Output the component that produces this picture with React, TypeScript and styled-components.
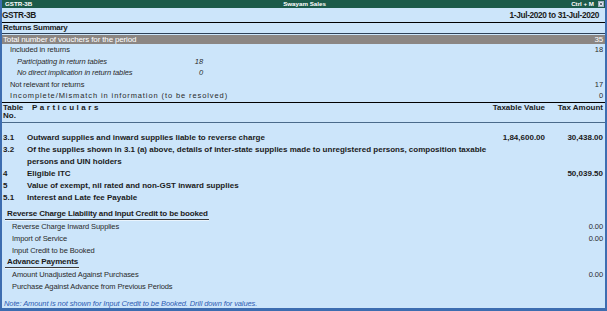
import React from "react";
import styled, { createGlobalStyle } from "styled-components";

const GlobalStyle = createGlobalStyle`
  html, body { margin: 0; padding: 0; background: #cce5fa; }
  body { width: 607px; height: 311px; overflow: hidden; }
`;

const Window = styled.div`
  box-sizing: border-box;
  width: 607px;
  height: 311px;
  display: flex;
  flex-direction: column;
  background: #cce5fa;
  border-left: 2px solid #3d6db0;
  border-right: 2px solid #3d6db0;
  border-bottom: 3px solid #3d6db0;
  font-family: "Liberation Sans", Arial, sans-serif;
  color: #1b1b1b;
  overflow: hidden;
`;

const TitleBar = styled.div`
  flex: none;
  height: 8px;
  display: grid;
  grid-template-columns: 1fr auto 1fr;
  align-items: center;
  padding: 0 1px 0 3px;
  background: #1c5b4a;
  color: #ffffff;
  font-size: 6.2px;
  font-weight: bold;
  line-height: 8px;
`;

const TitleRight = styled.div`
  display: flex;
  justify-content: flex-end;
  align-items: center;
  gap: 4px;
`;

const CloseBox = styled.span`
  display: inline-flex;
  width: 6px;
  height: 6px;
`;

const Header = styled.div`
  flex: none;
  height: 14px;
  display: flex;
  justify-content: space-between;
  align-items: center;
  padding: 0 6px 0 0;
  font-size: 8.3px;
  font-weight: bold;
  letter-spacing: -0.35px;
  border-bottom: 1px solid #000;
`;

const SectionTitle = styled.div`
  flex: none;
  height: 10px;
  line-height: 10px;
  padding-left: 1px;
  font-size: 8px;
  font-weight: bold;
  letter-spacing: -0.3px;
  border-bottom: 1px solid #2d4058;
  margin-bottom: 1px;
`;

const GreyBar = styled.div`
  flex: none;
  height: 9px;
  line-height: 9px;
  display: flex;
  justify-content: space-between;
  padding: 0 2px 0 1px;
  background: #8b8683;
  color: #ffffff;
  font-size: 8px;
  letter-spacing: -0.15px;
`;

const SummaryRow = styled.div<{ $italic?: boolean; $spread?: boolean }>`
  flex: none;
  height: 11.5px;
  line-height: 11.5px;
  display: grid;
  grid-template-columns: 201px 1fr;
  padding-right: 2px;
  font-size: 7.5px;
  letter-spacing: ${(p) => (p.$spread ? "0.9px" : "-0.1px")};
  color: #2a2a2a;
  font-style: ${(p) => (p.$italic ? "italic" : "normal")};
  white-space: nowrap;
`;

const SummaryLabel = styled.div<{ $indent: number }>`
  display: flex;
  justify-content: space-between;
  padding-left: ${(p) => p.$indent}px;
`;

const RightValue = styled.div`
  text-align: right;
  letter-spacing: -0.1px;
`;

const TableGrid = styled.div`
  display: grid;
  grid-template-columns: 24px 1fr 70px 58px;
  padding: 0 2px 0 1px;
  font-size: 8px;
  font-weight: bold;
`;

const TableHead = styled(TableGrid)`
  flex: none;
  box-sizing: border-box;
  height: 21px;
  line-height: 8px;
  padding-top: 1px;
  border-top: 1px solid #000;
  border-bottom: 1px solid #4a6a8a;
`;

const SpacedHead = styled.div`
  padding-left: 5px;
  letter-spacing: 2.5px;
`;

const Particular = styled.div`
  white-space: nowrap;
`;

const NumCell = styled.div`
  text-align: right;
`;

const TableBody = styled.div`
  flex: none;
  padding-top: 9px;
  line-height: 12px;
`;

const Group = styled.div`
  flex: none;
  display: flex;
  flex-direction: column;
  align-items: flex-start;
`;

const GroupHeading = styled.div<{ $first?: boolean }>`
  height: 10px;
  line-height: 10px;
  margin-left: 3px;
  margin-top: ${(p) => (p.$first ? "5px" : "0")};
  margin-bottom: 1px;
  padding: 0 1px 0 2px;
  font-size: 8px;
  font-weight: bold;
  letter-spacing: -0.15px;
  border-bottom: 1px solid #3b3b3b;
  box-shadow: 0 1px 0 #eaf4fd;
`;

const ItemRow = styled.div`
  align-self: stretch;
  height: 12px;
  line-height: 12px;
  display: flex;
  justify-content: space-between;
  padding: 0 2px 0 10px;
  font-size: 7.5px;
  letter-spacing: -0.1px;
  color: #2a2a2a;
`;

const Note = styled.div`
  margin-top: auto;
  flex: none;
  height: 9px;
  line-height: 9px;
  padding-left: 2px;
  font-size: 7.5px;
  font-style: italic;
  letter-spacing: -0.1px;
  color: #2c5cb3;
`;

type Summary = {
  label: string;
  indent: number;
  italic?: boolean;
  spread?: boolean;
  inline?: string;
  value?: string;
};

const summary: Summary[] = [
  { label: "Included in returns", indent: 8, value: "18" },
  { label: "Participating in return tables", indent: 15, italic: true, inline: "18" },
  { label: "No direct implication in return tables", indent: 15, italic: true, inline: "0" },
  { label: "Not relevant for returns", indent: 8, value: "17" },
  { label: "Incomplete/Mismatch in information (to be resolved)", indent: 8, spread: true, value: "0" },
];

type TRow = { no: string; text: React.ReactNode; taxable?: string; tax?: string };

const rows: TRow[] = [
  {
    no: "3.1",
    text: "Outward supplies and inward supplies liable to reverse charge",
    taxable: "1,84,600.00",
    tax: "30,438.00",
  },
  {
    no: "3.2",
    text: (
      <>
        Of the supplies shown in 3.1 (a) above, details of inter-state supplies made to unregistered persons, composition taxable
        <br />
        persons and UIN holders
      </>
    ),
  },
  { no: "4", text: "Eligible ITC", tax: "50,039.50" },
  { no: "5", text: "Value of exempt, nil rated and non-GST inward supplies" },
  { no: "5.1", text: "Interest and Late fee Payable" },
];

const reverseItems: [string, string][] = [
  ["Reverse Charge Inward Supplies", "0.00"],
  ["Import of Service", "0.00"],
  ["Input Credit to be Booked", ""],
];

const advanceItems: [string, string][] = [
  ["Amount Unadjusted Against Purchases", "0.00"],
  ["Purchase Against Advance from Previous Periods", ""],
];

export default function App() {
  return (
    <>
      <GlobalStyle />
      <Window>
        <TitleBar>
          <span>GSTR-3B</span>
          <span>Swayam Sales</span>
          <TitleRight>
            <span>Ctrl + M</span>
            <CloseBox>
              <svg width="6" height="6" viewBox="0 0 6 6">
                <rect x="0.5" y="0.5" width="5" height="5" fill="#dfe6ee" stroke="#9fb0c0" strokeWidth="1" />
                <path d="M1.8 1.8 L4.2 4.2 M4.2 1.8 L1.8 4.2" stroke="#44505c" strokeWidth="0.8" />
              </svg>
            </CloseBox>
          </TitleRight>
        </TitleBar>

        <Header>
          <span>GSTR-3B</span>
          <span>1-Jul-2020 to 31-Jul-2020</span>
        </Header>

        <SectionTitle>Returns Summary</SectionTitle>

        <GreyBar>
          <span>Total number of vouchers for the period</span>
          <span>35</span>
        </GreyBar>

        {summary.map((s) => (
          <SummaryRow key={s.label} $italic={s.italic} $spread={s.spread}>
            <SummaryLabel $indent={s.indent}>
              <span>{s.label}</span>
              <span>{s.inline}</span>
            </SummaryLabel>
            <RightValue>{s.value}</RightValue>
          </SummaryRow>
        ))}

        <TableHead>
          <div>
            Table
            <br />
            No.
          </div>
          <SpacedHead>Particulars</SpacedHead>
          <NumCell>Taxable Value</NumCell>
          <NumCell>Tax Amount</NumCell>
        </TableHead>

        <TableBody>
          {rows.map((r) => (
            <TableGrid key={r.no}>
              <div>{r.no}</div>
              <Particular>{r.text}</Particular>
              <NumCell>{r.taxable}</NumCell>
              <NumCell>{r.tax}</NumCell>
            </TableGrid>
          ))}
        </TableBody>

        <Group>
          <GroupHeading $first>Reverse Charge Liability and Input Credit to be booked</GroupHeading>
          {reverseItems.map(([label, value]) => (
            <ItemRow key={label}>
              <span>{label}</span>
              <span>{value}</span>
            </ItemRow>
          ))}
          <GroupHeading>Advance Payments</GroupHeading>
          {advanceItems.map(([label, value]) => (
            <ItemRow key={label}>
              <span>{label}</span>
              <span>{value}</span>
            </ItemRow>
          ))}
        </Group>

        <Note>Note: Amount is not shown for Input Credit to be Booked. Drill down for values.</Note>
      </Window>
    </>
  );
}
